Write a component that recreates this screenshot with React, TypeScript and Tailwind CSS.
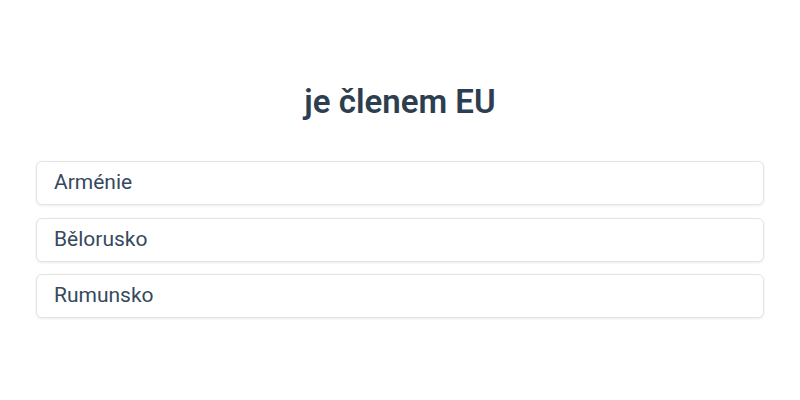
const options = ["Arménie", "Bělorusko", "Rumunsko"];

export default function App() {
  return (
    <div
      className="w-[800px] h-[400px] bg-white text-[#2c3e50] flex flex-col items-center"
      style={{ fontFamily: "Roboto, 'Liberation Sans', sans-serif" }}
    >
      <h1 className="mt-[80px] text-[33px] leading-[44px] font-semibold">je členem EU</h1>
      <div className="mt-[37px] w-[728px] flex flex-col gap-[12.5px]">
        {options.map((o) => (
          <button
            key={o}
            className="h-[44px] w-full text-left px-[17px] text-[21px] text-[#35495e] border border-[#e3e3e3] rounded-[6px] bg-white shadow-[0_1px_3px_rgba(0,0,0,0.08)]"
          >
            {o}
          </button>
        ))}
      </div>
    </div>
  );
}
